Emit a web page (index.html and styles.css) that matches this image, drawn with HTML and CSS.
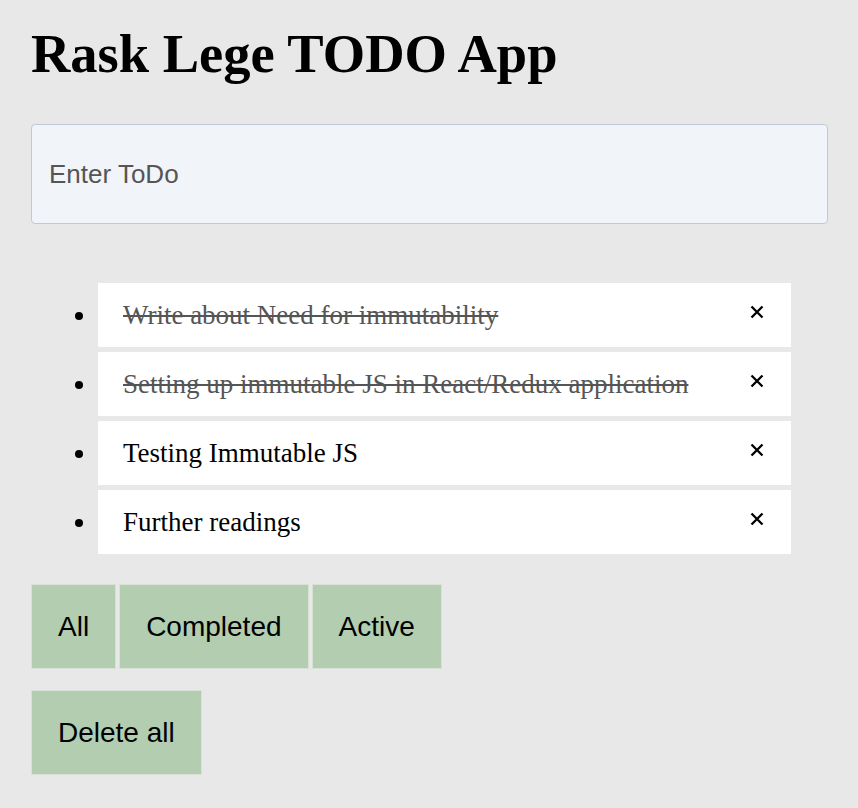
FILE: index.html
```html
<!DOCTYPE html>
<html>
<head>
<meta charset="utf-8">
<title>Rask Lege TODO App</title>
<link rel="stylesheet" href="styles.css">
</head>
<body>
<div class="app">
  <h1 class="title">Rask Lege TODO App</h1>
  <input class="todo-input" type="text" placeholder="Enter ToDo">
  <ul class="todo-list">
    <li class="todo-item">
      <div class="todo-row">
        <span class="todo-text done">Write about Need for immutability</span>
        <button class="remove" aria-label="remove"><svg width="14" height="14" viewBox="0 0 14 14"><path d="M1.5 1.5L12.5 12.5M12.5 1.5L1.5 12.5" stroke="#000" stroke-width="2.3" stroke-linecap="butt"/></svg></button>
      </div>
    </li>
    <li class="todo-item">
      <div class="todo-row">
        <span class="todo-text done">Setting up immutable JS in React/Redux application</span>
        <button class="remove" aria-label="remove"><svg width="14" height="14" viewBox="0 0 14 14"><path d="M1.5 1.5L12.5 12.5M12.5 1.5L1.5 12.5" stroke="#000" stroke-width="2.3" stroke-linecap="butt"/></svg></button>
      </div>
    </li>
    <li class="todo-item">
      <div class="todo-row">
        <span class="todo-text">Testing Immutable JS</span>
        <button class="remove" aria-label="remove"><svg width="14" height="14" viewBox="0 0 14 14"><path d="M1.5 1.5L12.5 12.5M12.5 1.5L1.5 12.5" stroke="#000" stroke-width="2.3" stroke-linecap="butt"/></svg></button>
      </div>
    </li>
    <li class="todo-item">
      <div class="todo-row">
        <span class="todo-text">Further readings</span>
        <button class="remove" aria-label="remove"><svg width="14" height="14" viewBox="0 0 14 14"><path d="M1.5 1.5L12.5 12.5M12.5 1.5L1.5 12.5" stroke="#000" stroke-width="2.3" stroke-linecap="butt"/></svg></button>
      </div>
    </li>
  </ul>
  <div class="filters">
    <button class="btn">All</button>
    <button class="btn">Completed</button>
    <button class="btn">Active</button>
  </div>
  <div class="actions">
    <button class="btn">Delete all</button>
  </div>
</div>
</body>
</html>
```

FILE: styles.css
```css
html, body {
  margin: 0;
  padding: 0;
  background: #e8e8e8;
}

.app {
  padding: 22px 30px 0 31px;
  font-family: "Liberation Serif", "Times New Roman", serif;
}

.title {
  margin: 0 0 39px 0;
  font-family: "Liberation Serif", "Times New Roman", serif;
  font-size: 54.5px;
  font-weight: bold;
  line-height: 63px;
  color: #000;
}

.todo-input {
  display: block;
  box-sizing: border-box;
  width: 797px;
  height: 100px;
  margin: 0;
  padding: 0 0 0 17px;
  border: 1.5px solid #bfc9d6;
  border-radius: 4px;
  background: #f1f5f9;
  font-family: "Liberation Sans", Arial, sans-serif;
  font-size: 26px;
  color: #333;
  outline: none;
}

.todo-input::placeholder {
  color: #555;
}

.todo-list {
  margin: 59px 37px 30px 0;
  padding: 0 0 0 67px;
  list-style: disc;
}

.todo-item {
  background: #fff;
  margin: 0 0 5px 0;
  font-size: 27px;
  line-height: 64px;
  color: #000;
}

.todo-row {
  display: flex;
  justify-content: space-between;
  align-items: center;
  height: 64px;
  padding: 0 27px 0 25px;
}

.todo-text.done {
  color: #555;
  text-decoration: line-through;
  text-decoration-thickness: 1.5px;
}

.remove {
  display: flex;
  align-items: center;
  justify-content: center;
  width: 14px;
  height: 14px;
  margin: -6px 0 0 0;
  padding: 0;
  border: none;
  background: transparent;
  cursor: pointer;
}

.filters {
  display: flex;
  gap: 3px;
}

.actions {
  display: flex;
  margin-top: 21px;
}

.btn {
  margin: 0;
  padding: 25.5px 26px;
  border: 1px solid #d7e2d5;
  background: #b2cdb0;
  font-family: "Liberation Sans", Arial, sans-serif;
  font-size: 28px;
  line-height: 32px;
  color: #000;
  cursor: pointer;
}
```
